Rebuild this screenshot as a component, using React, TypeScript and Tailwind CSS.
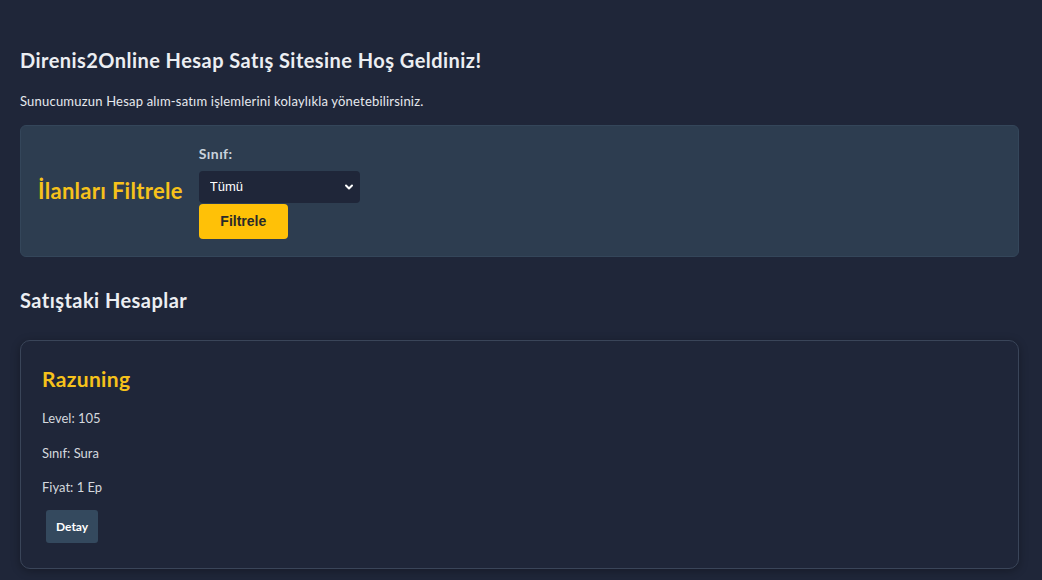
import { useState } from 'react';

const accounts = [{ name: 'Razuning', level: 105, cls: 'Sura', price: '1 Ep' }];

const App = () => {
  const [cls, setCls] = useState('Tümü');

  return (
    <div className="min-h-screen bg-[#1f2639] pl-5 pr-[23px] pt-[46px] pb-10 font-['Lato','Noto_Sans',sans-serif] text-[#e6e9ee]">
      <h1 className="text-[20px] font-bold leading-[28px] tracking-[0.45px] text-[#eceef2]">
        Direnis2Online Hesap Satış Sitesine Hoş Geldiniz!
      </h1>
      <p className="mt-[18px] text-[13px] leading-[18px] tracking-[0.2px] text-[#e6e9ee]">
        Sunucumuzun Hesap alım-satım işlemlerini kolaylıkla yönetebilirsiniz.
      </p>

      <div className="mt-[15px] flex h-[132px] items-center rounded-md border border-[#34465a] bg-[#2d3d50] pl-[17px] pr-[18px]">
        <h2 className="text-[22px] font-bold leading-[28px] tracking-[0.3px] text-[#f6c21b]">İlanları Filtrele</h2>
        <div className="ml-4 flex flex-col items-start pt-px">
          <label className="mb-2 text-[14px] font-bold leading-[18px] tracking-[0.4px] text-[#c9d3dd]">Sınıf:</label>
          <div className="relative w-[161px]">
            <select
              value={cls}
              onChange={(e) => setCls(e.target.value)}
              className="h-8 w-full appearance-none rounded-[4px] bg-[#1f2639] pl-[11px] font-['Liberation_Sans',Arial,sans-serif] text-[13px] text-white outline-none"
            >
              <option>Tümü</option>
              <option>Savaşçı</option>
              <option>Sura</option>
              <option>Ninja</option>
              <option>Şaman</option>
            </select>
            <svg
              className="pointer-events-none absolute right-[6px] top-[11px]"
              width="10"
              height="10"
              viewBox="0 0 10 10"
              fill="none"
              stroke="white"
              strokeWidth="2"
              strokeLinecap="round"
              strokeLinejoin="round"
            >
              <path d="M2 3.5 5 6.5 8 3.5" />
            </svg>
          </div>
          <button className="mt-px h-[35px] w-[89px] rounded-[4px] bg-[#ffc107] font-['Liberation_Sans',Arial,sans-serif] text-[14px] font-bold text-[#2a2a2a]">
            Filtrele
          </button>
        </div>
      </div>

      <h2 className="mt-[29px] text-[20px] font-bold leading-[28px] tracking-[0.45px] text-[#eceef2]">Satıştaki Hesaplar</h2>

      {accounts.map((a) => (
        <div
          key={a.name}
          className="mt-[26px] rounded-[10px] border border-[#3a4559] bg-[#1f2639] px-[21px] pt-6 pb-[25px] shadow-[0_2px_10px_rgba(0,0,0,0.3)]"
        >
          <h3 className="text-[21px] font-bold leading-[28px] tracking-[0.35px] text-[#f6c21b]">{a.name}</h3>
          <div className="mt-4 text-[13px] leading-[18px] text-[#d4d8de]">
            <p>Level: {a.level}</p>
            <p className="mt-[17px]">Sınıf: {a.cls}</p>
            <p className="mt-4">Fiyat: {a.price}</p>
          </div>
          <button className="ml-1 mt-[14px] h-[33px] rounded-[3px] bg-[#34495e] px-[10px] text-[12px] font-bold text-white">
            Detay
          </button>
        </div>
      ))}
    </div>
  );
};

export default App;
